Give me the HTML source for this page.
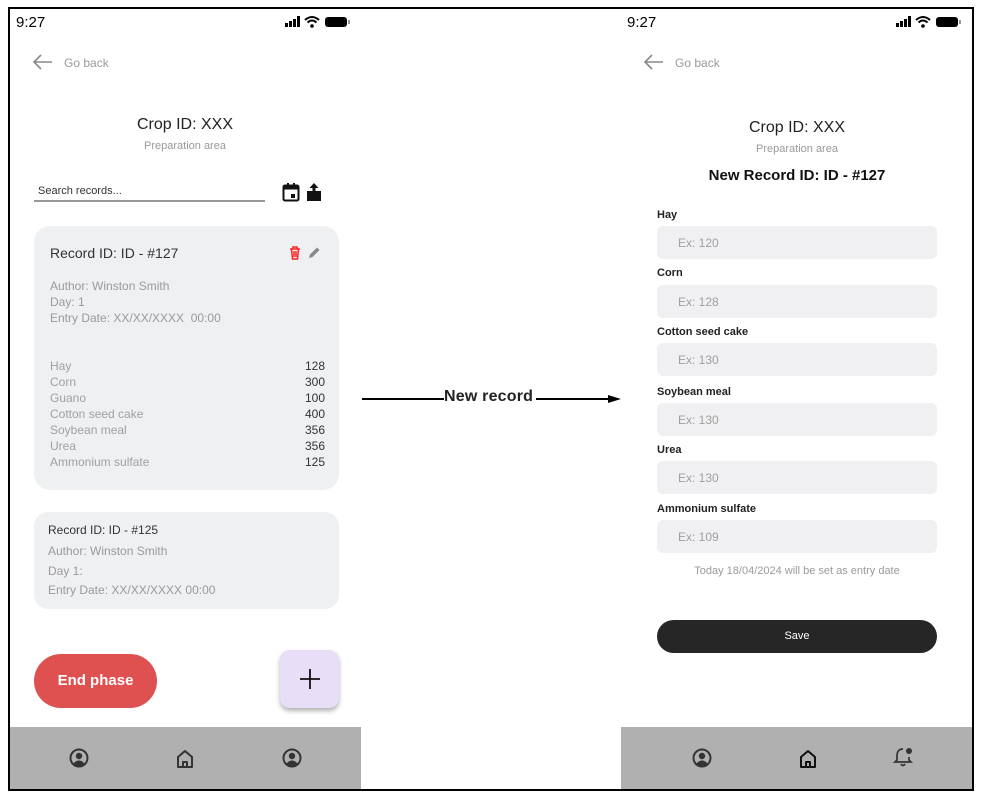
<!DOCTYPE html>
<html><head><meta charset="utf-8"><style>
*{margin:0;padding:0;box-sizing:border-box}
body{width:986px;height:801px;background:#fff;font-family:"Liberation Sans",sans-serif;position:relative;overflow:hidden}
.a{position:absolute}
.frame{left:8px;top:7px;width:966px;height:784px;border:2px solid #000}
.g{color:#9a9a9a}
.nav{background:#b0b0b0;height:62px;top:727px}
.inp{position:absolute;left:657px;width:280px;height:33px;background:#f0f0f2;border-radius:6px;color:#a0a0a0;font-size:12px;padding:10px 0 0 21px}
.lbl{position:absolute;left:657px;font-size:11px;font-weight:bold;color:#222}
.row{position:absolute;left:50px;width:275px;font-size:12px;color:#a0a0a0}
.row span{position:absolute;right:0;color:#333}
</style></head><body>
<div class="a frame"></div>

<!-- LEFT PHONE -->
<div class="a" style="left:16px;top:14px;font-size:15px">9:27</div>
<svg class="a" style="left:284px;top:15px" width="68" height="14" viewBox="0 0 68 14">
<rect x="1" y="8" width="3" height="4" fill="#000"/><rect x="5" y="6" width="3" height="6" fill="#000"/><rect x="9" y="4" width="3" height="8" fill="#000"/><rect x="13" y="1" width="3" height="11" fill="#000"/>
<path d="M21 5 Q28 -1 35 5 M23.5 7.5 Q28 3.5 32.5 7.5" stroke="#000" stroke-width="2" fill="none"/><circle cx="28" cy="11" r="1.8" fill="#000"/>
<rect x="41" y="2" width="22" height="10" rx="3" fill="#000"/><rect x="64" y="5" width="2" height="4" fill="#999"/></svg>
<svg class="a" style="left:32px;top:53px" width="22" height="18"><path d="M20 9H2M9 2L2 9l7 7" stroke="#888" stroke-width="1.6" fill="none"/></svg>
<div class="a g" style="left:64px;top:56px;font-size:12px">Go back</div>
<div class="a" style="left:9px;width:352px;top:116px;text-align:center;font-size:16px;color:#222">Crop ID: XXX</div>
<div class="a g" style="left:9px;width:352px;top:140px;text-align:center;font-size:11px">Preparation area</div>
<div class="a" style="left:38px;top:185px;font-size:11px;color:#333">Search records...</div>
<div class="a" style="left:34px;top:200px;width:231px;height:2px;background:#999"></div>
<svg class="a" style="left:282px;top:182px" width="18" height="20"><rect x="1.5" y="3.5" width="15" height="15" rx="1.5" stroke="#111" stroke-width="2" fill="none"/><rect x="1.5" y="3.5" width="15" height="4" fill="#111"/><rect x="5" y="1" width="2" height="4" fill="#111"/><rect x="11" y="1" width="2" height="4" fill="#111"/><rect x="9" y="12" width="4" height="4" fill="#111"/></svg>
<svg class="a" style="left:306px;top:182px" width="16" height="20"><path d="M8 1L3.5 6H6.5V11H9.5V6H12.5Z" fill="#111"/><rect x="1" y="9" width="14" height="10" fill="#111"/><rect x="6.5" y="9" width="3" height="2" fill="#111"/></svg>

<div class="a" style="left:34px;top:226px;width:305px;height:264px;background:#eff0f2;border-radius:16px"></div>
<div class="a" style="left:50px;top:245px;font-size:14px;color:#333">Record ID: ID - #127</div>
<svg class="a" style="left:289px;top:246px" width="12" height="14"><path d="M1 3H11M4 3V1H8V3M2.5 3L3.5 13H8.5L9.5 3M5 5V11M7 5V11" stroke="#f22" stroke-width="1.5" fill="none"/></svg>
<svg class="a" style="left:307px;top:246px" width="14" height="14"><path d="M2 12L3 8.5L10 1.5L12.5 4L5.5 11Z" fill="#888"/></svg>
<div class="a g" style="left:50px;top:278px;font-size:12px;line-height:16px">Author: Winston Smith<br>Day: 1<br>Entry Date: XX/XX/XXXX&nbsp; 00:00</div>
<div class="row" style="top:359px">Hay<span>128</span></div>
<div class="row" style="top:375px">Corn<span>300</span></div>
<div class="row" style="top:391px">Guano<span>100</span></div>
<div class="row" style="top:407px">Cotton seed cake<span>400</span></div>
<div class="row" style="top:423px">Soybean meal<span>356</span></div>
<div class="row" style="top:439px">Urea<span>356</span></div>
<div class="row" style="top:455px">Ammonium sulfate<span>125</span></div>

<div class="a" style="left:34px;top:512px;width:305px;height:97px;background:#eff0f2;border-radius:14px"></div>
<div class="a" style="left:48px;top:523px;font-size:12px;color:#333">Record ID: ID - #125</div>
<div class="a g" style="left:48px;top:542px;font-size:12px;line-height:19.5px">Author: Winston Smith<br>Day 1:<br>Entry Date: XX/XX/XXXX 00:00</div>

<div class="a" style="left:34px;top:654px;width:123px;height:54px;background:#df5050;border-radius:27px;color:#fff;font-weight:bold;font-size:15px;text-align:center;line-height:54px">End phase</div>
<div class="a" style="left:280px;top:650px;width:59px;height:58px;background:#e8def8;border-radius:10px;box-shadow:0 3px 5px rgba(0,0,0,.3)"></div>
<svg class="a" style="left:299px;top:668px" width="22" height="22"><path d="M11 1V21M1 11H21" stroke="#111" stroke-width="1.8"/></svg>

<div class="a nav" style="left:10px;width:351px"></div>
<svg class="a" style="left:69px;top:748px" width="20" height="20"><circle cx="10" cy="10" r="8.5" stroke="#333" stroke-width="2" fill="none"/><circle cx="10" cy="8" r="3.2" fill="#333"/><path d="M4 16Q10 9 16 16Q10 20 4 16Z" fill="#333"/></svg>
<svg class="a" style="left:176px;top:749px" width="18" height="20"><path d="M2 8L9 2L16 8V18H2Z M7 18V13H11V18" stroke="#333" stroke-width="2" fill="none" stroke-linejoin="round"/></svg>
<svg class="a" style="left:282px;top:748px" width="20" height="20"><circle cx="10" cy="10" r="8.5" stroke="#333" stroke-width="2" fill="none"/><circle cx="10" cy="8" r="3.2" fill="#333"/><path d="M4 16Q10 9 16 16Q10 20 4 16Z" fill="#333"/></svg>

<!-- ARROW -->
<div class="a" style="left:362px;top:398px;width:82px;height:2px;background:#000"></div>
<div class="a" style="left:444px;top:388px;font-size:16px;font-weight:bold;color:#222;letter-spacing:0.2px">New record</div>
<div class="a" style="left:536px;top:398px;width:75px;height:2px;background:#000"></div>
<svg class="a" style="left:608px;top:393px" width="14" height="12"><path d="M0 2L13 6L0 10Z" fill="#000"/></svg>

<!-- RIGHT PHONE -->
<div class="a" style="left:627px;top:14px;font-size:15px">9:27</div>
<svg class="a" style="left:895px;top:15px" width="68" height="14" viewBox="0 0 68 14">
<rect x="1" y="8" width="3" height="4" fill="#000"/><rect x="5" y="6" width="3" height="6" fill="#000"/><rect x="9" y="4" width="3" height="8" fill="#000"/><rect x="13" y="1" width="3" height="11" fill="#000"/>
<path d="M21 5 Q28 -1 35 5 M23.5 7.5 Q28 3.5 32.5 7.5" stroke="#000" stroke-width="2" fill="none"/><circle cx="28" cy="11" r="1.8" fill="#000"/>
<rect x="41" y="2" width="22" height="10" rx="3" fill="#000"/><rect x="64" y="5" width="2" height="4" fill="#999"/></svg>
<svg class="a" style="left:643px;top:53px" width="22" height="18"><path d="M20 9H2M9 2L2 9l7 7" stroke="#888" stroke-width="1.6" fill="none"/></svg>
<div class="a g" style="left:675px;top:56px;font-size:12px">Go back</div>
<div class="a" style="left:621px;width:352px;top:119px;text-align:center;font-size:16px;color:#222">Crop ID: XXX</div>
<div class="a g" style="left:621px;width:352px;top:143px;text-align:center;font-size:11px">Preparation area</div>
<div class="a" style="left:621px;width:352px;top:167px;text-align:center;font-size:15px;font-weight:bold;color:#111">New Record ID: ID - #127</div>

<div class="lbl" style="top:209px">Hay</div><div class="inp" style="top:226px">Ex: 120</div>
<div class="lbl" style="top:267px">Corn</div><div class="inp" style="top:285px">Ex: 128</div>
<div class="lbl" style="top:326px">Cotton seed cake</div><div class="inp" style="top:343px">Ex: 130</div>
<div class="lbl" style="top:386px">Soybean meal</div><div class="inp" style="top:403px">Ex: 130</div>
<div class="lbl" style="top:444px">Urea</div><div class="inp" style="top:461px">Ex: 130</div>
<div class="lbl" style="top:503px">Ammonium sulfate</div><div class="inp" style="top:520px">Ex: 109</div>
<div class="a g" style="left:621px;width:352px;top:565px;text-align:center;font-size:11px">Today 18/04/2024 will be set as entry date</div>
<div class="a" style="left:657px;top:620px;width:280px;height:33px;background:#262626;border-radius:17px;color:#fff;font-size:11px;text-align:center;line-height:33px">Save</div>

<div class="a nav" style="left:621px;width:351px"></div>
<svg class="a" style="left:692px;top:748px" width="20" height="20"><circle cx="10" cy="10" r="8.5" stroke="#333" stroke-width="2" fill="none"/><circle cx="10" cy="8" r="3.2" fill="#333"/><path d="M4 16Q10 9 16 16Q10 20 4 16Z" fill="#333"/></svg>
<svg class="a" style="left:799px;top:749px" width="18" height="20"><path d="M2 8L9 2L16 8V18H2Z M7 18V13H11V18" stroke="#111" stroke-width="2" fill="none" stroke-linejoin="round"/></svg>
<svg class="a" style="left:893px;top:746px" width="22" height="22"><path d="M10 3Q4 3 4 10V14L2 16H18L16 14V11 M8 18Q10 21 12 18" stroke="#333" stroke-width="1.7" fill="none"/><circle cx="16" cy="5" r="3" fill="#333"/></svg>
</body></html>
